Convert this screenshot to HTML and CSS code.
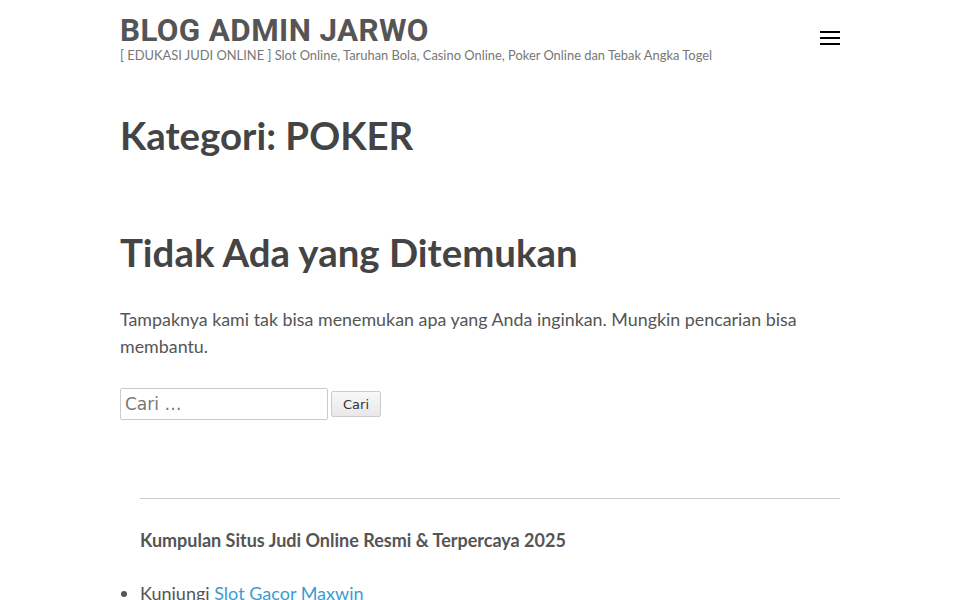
FILE: index.html
```html
<!DOCTYPE html>
<html lang="id">
<head>
<meta charset="utf-8">
<title>POKER – BLOG ADMIN JARWO</title>
<link rel="stylesheet" href="styles.css">
</head>
<body>
<div class="page">
  <header class="site-header">
    <div class="branding">
      <p class="site-title">BLOG ADMIN JARWO</p>
      <p class="site-desc">[ EDUKASI JUDI ONLINE ] Slot Online, Taruhan Bola, Casino Online, Poker Online dan Tebak Angka Togel</p>
    </div>
    <button class="menu-toggle" aria-label="Menu">
      <span></span><span></span><span></span>
    </button>
  </header>

  <main class="content">
    <h1 class="page-title">Kategori: POKER</h1>
    <section class="no-results">
      <h2 class="nr-title">Tidak Ada yang Ditemukan</h2>
      <p class="nr-text">Tampaknya kami tak bisa menemukan apa yang Anda inginkan. Mungkin pencarian bisa membantu.</p>
      <form class="search-form">
        <input class="search-field" type="search" placeholder="Cari …">
        <button class="search-submit" type="button">Cari</button>
      </form>
    </section>
  </main>

  <aside class="widgets">
    <hr class="sep">
    <h3 class="widget-title">Kumpulan Situs Judi Online Resmi &amp; Terpercaya 2025</h3>
    <ul class="widget-list">
      <li>Kunjungi <a href="#">Slot Gacor Maxwin</a></li>
    </ul>
  </aside>
</div>
</body>
</html>
```

FILE: styles.css
```css
html, body {
  margin: 0;
  padding: 0;
  background: #fff;
}
body {
  font-family: Lato, "Open Sans", sans-serif;
  color: #555;
}
.page {
  width: 720px;
  margin: 0 auto;
}
.site-header {
  display: flex;
  justify-content: space-between;
  align-items: flex-start;
  padding-top: 13px;
}
.site-title {
  margin: 0;
  font-family: Roboto, "Liberation Sans", sans-serif;
  font-weight: 700;
  font-size: 31.4px;
  line-height: 35px;
  color: #555;
  letter-spacing: 0.4px;
}
.site-desc {
  margin: 0;
  font-size: 12.9px;
  line-height: 14px;
  color: #777;
}
.menu-toggle {
  margin-top: 18px;
  width: 20px;
  height: 14px;
  padding: 0;
  border: 0;
  background: none;
  display: flex;
  flex-direction: column;
  justify-content: space-between;
}
.menu-toggle span {
  display: block;
  height: 2px;
  width: 20px;
  background: #000;
}
.content {
  padding-top: 46px;
}
.page-title {
  margin: 0;
  font-size: 38.4px;
  font-weight: 700;
  line-height: 54px;
  color: #444;
}
.no-results {
  padding-top: 63px;
}
.nr-title {
  margin: 0;
  font-size: 38.4px;
  font-weight: 700;
  line-height: 54px;
  color: #444;
}
.nr-text {
  margin: 27px 0 0;
  font-size: 17.85px;
  line-height: 27px;
  color: #555;
}
.search-form {
  display: flex;
  align-items: center;
  gap: 3px;
  margin-top: 28px;
}
.search-field {
  box-sizing: border-box;
  width: 208px;
  height: 32px;
  border: 1px solid #ccc;
  border-radius: 2px;
  padding: 2px 4px;
  font-family: "DejaVu Sans", sans-serif;
  font-size: 17px;
  color: #555;
  background: #fff;
}
.search-field::placeholder {
  color: #777;
}
.search-submit {
  box-sizing: border-box;
  width: 50px;
  height: 26px;
  border: 1px solid #ccc;
  border-radius: 2px;
  background: linear-gradient(#f8f8f8, #e8e8e8);
  font-family: "DejaVu Sans", sans-serif;
  font-size: 13px;
  color: #333;
  padding: 0;
}
.widgets {
  padding-left: 20px;
  padding-top: 78px;
}
.sep {
  margin: 0;
  border: 0;
  border-top: 1px solid #ccc;
}
.widget-title {
  margin: 28px 0 0;
  font-size: 18px;
  font-weight: 700;
  line-height: 27px;
  color: #555;
}
.widget-list {
  margin: 26px 0 0;
  padding-left: 0;
  font-size: 18px;
  line-height: 27px;
}
.widget-list a {
  color: #3b9bd0;
  text-decoration: none;
}
```
